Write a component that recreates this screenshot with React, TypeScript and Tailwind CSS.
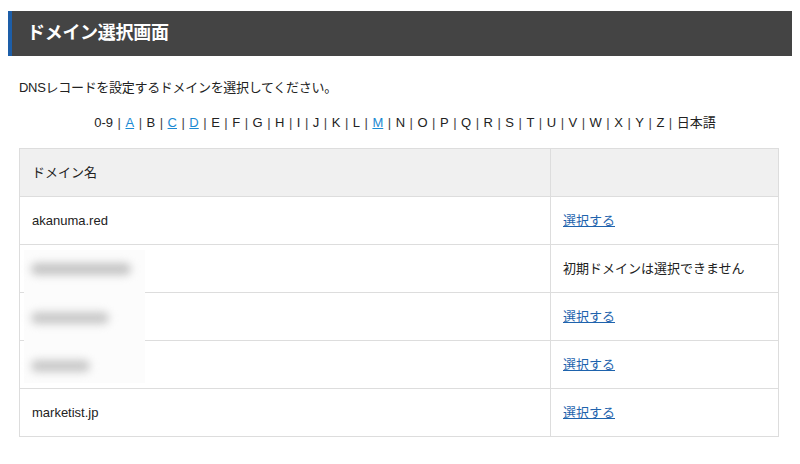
import React from "react";

const letters = ["0-9", "A", "B", "C", "D", "E", "F", "G", "H", "I", "J", "K", "L", "M", "N", "O", "P", "Q", "R", "S", "T", "U", "V", "W", "X", "Y", "Z", "日本語"];
const linked = ["A", "C", "D", "M"];

const rows = [
  { name: "akanuma.red", action: "link" },
  { name: "", action: "none" },
  { name: "", action: "link" },
  { name: "", action: "link" },
  { name: "marketist.jp", action: "link" },
];

export default function App() {
  return (
    <div
      className="w-[800px] h-[464px] bg-white text-[#222] overflow-hidden"
      style={{ fontFamily: '"Liberation Sans", "Noto Sans CJK JP", sans-serif' }}
    >
      <div className="pt-[11px] px-2">
        <div className="h-[45px] bg-[#444444] border-l-4 border-[#1d5ea8] flex items-center pl-[15px]">
          <h1 className="text-white text-[18px] font-bold tracking-[-0.3px]">ドメイン選択画面</h1>
        </div>
      </div>

      <div className="px-[19px]">
        <p className="mt-[23px] text-[13px] leading-[18px] tracking-[-0.3px]">DNSレコードを設定するドメインを選択してください。</p>

        <div className="mt-[17px] flex justify-center text-[13px] leading-[18px] pl-[10px]">
          {letters.map((l, i) => (
            <span key={l} className="flex">
              {i > 0 && <span className="px-[4.5px] text-[#444]">|</span>}
              {linked.includes(l) ? (
                <a href="#" className="text-[#1b8ad3] underline">{l}</a>
              ) : (
                l
              )}
            </span>
          ))}
        </div>

        <div className="relative mt-[16px]">
          <table className="w-[760px] border-collapse text-[13px]">
            <thead>
              <tr className="h-[48px] bg-[#f0f0f0]">
                <th className="border border-[#dddddd] text-left font-normal pl-[12px] w-[531px]">ドメイン名</th>
                <th className="border border-[#dddddd]"></th>
              </tr>
            </thead>
            <tbody>
              {rows.map((r, i) => (
                <tr key={i} className="h-[48px]">
                  <td className="border border-[#dddddd] pl-[12px]">{r.name}</td>
                  <td className="border border-[#dddddd] pl-[12px]">
                    {r.action === "link" ? (
                      <a href="#" className="text-[#1e63ad] underline">選択する</a>
                    ) : (
                      "初期ドメインは選択できません"
                    )}
                  </td>
                </tr>
              ))}
            </tbody>
          </table>

          {/* blurred private domains */}
          <div className="absolute left-[5px] top-[102px] w-[121px] h-[133px] bg-[#fcfcfc]">
            <div className="absolute left-[7px] top-[13px] w-[100px] h-[12px] rounded-full bg-[#c4c4c4] blur-[4px]"></div>
            <div className="absolute left-[7px] top-[62px] w-[78px] h-[12px] rounded-full bg-[#c8c8c8] blur-[4px]"></div>
            <div className="absolute left-[7px] top-[110px] w-[59px] h-[12px] rounded-full bg-[#c8c8c8] blur-[4px]"></div>
          </div>
        </div>
      </div>
    </div>
  );
}
